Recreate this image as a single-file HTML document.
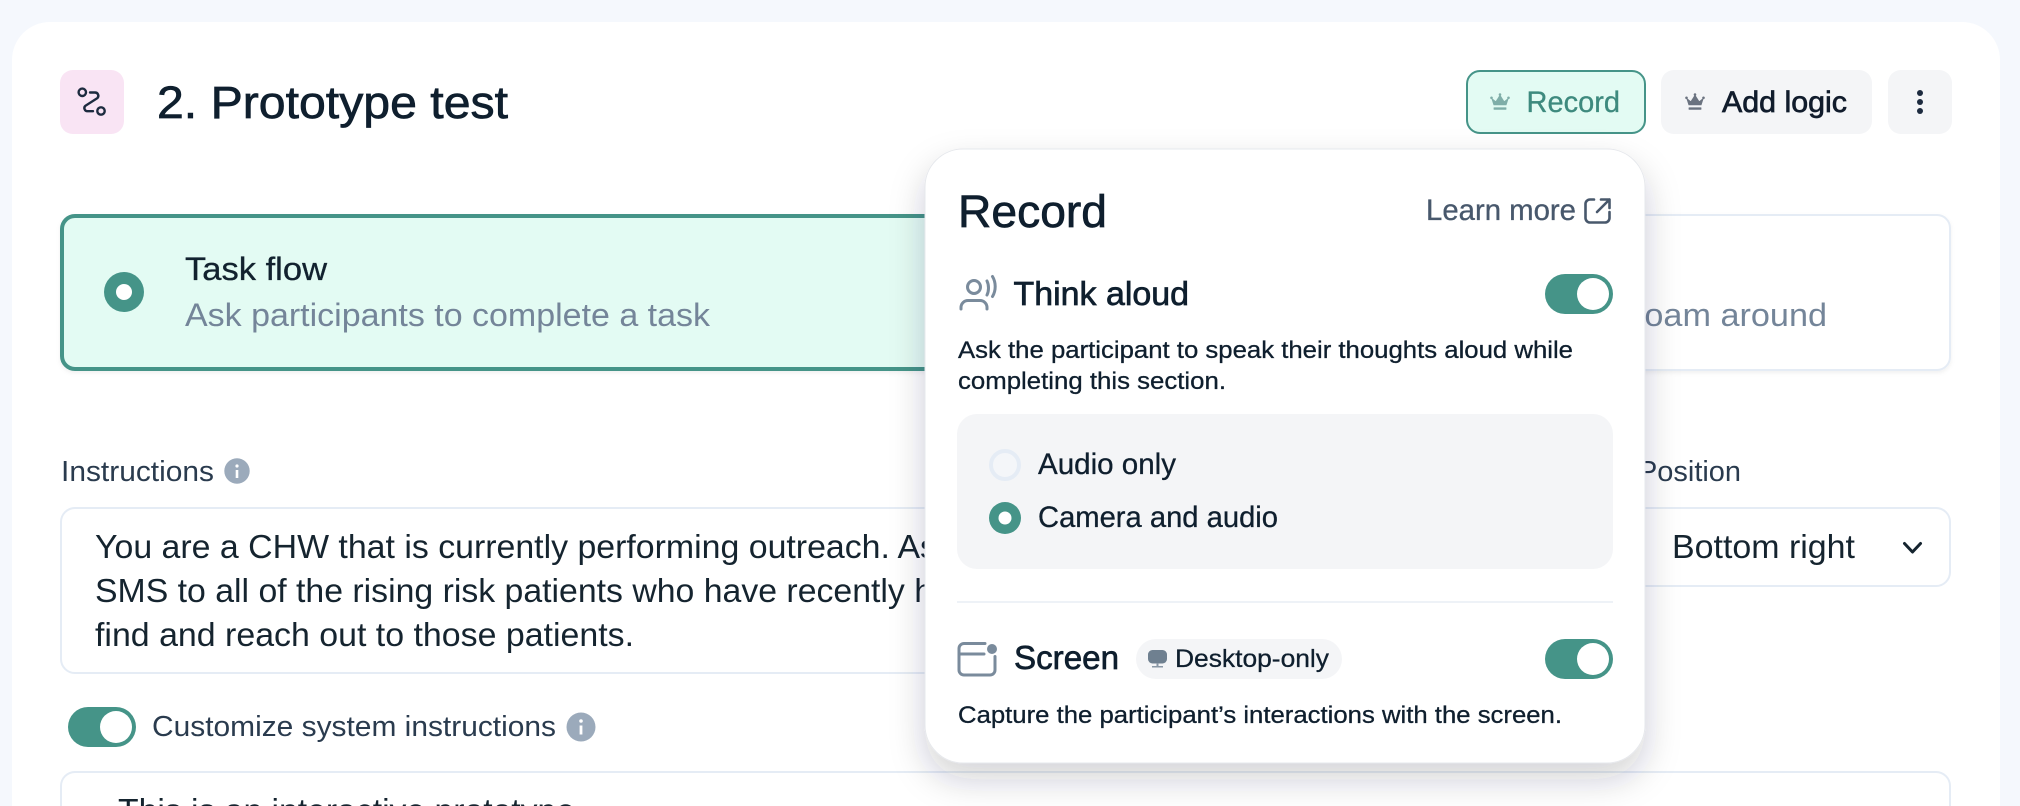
<!DOCTYPE html>
<html lang="en">
<head>
<meta charset="utf-8">
<title>Prototype test</title>
<style>
html,body{margin:0;padding:0;background:#F5F8FD;width:2020px;height:806px;overflow:hidden}
svg{display:block;font-family:"Liberation Sans",sans-serif;overflow:hidden}
.m{stroke:currentColor;stroke-width:.7px}
.s{stroke:currentColor;stroke-width:.3px}
text{fill:currentColor;color:#0F1F2E}
</style>
</head>
<body>
<svg width="2020" height="806" viewBox="0 0 2020 806" xmlns="http://www.w3.org/2000/svg">
<defs>
<filter id="pop" x="-10%" y="-10%" width="120%" height="123%">
<feDropShadow dx="0" dy="16" stdDeviation="17" flood-color="#1a2433" flood-opacity=".2"/>
</filter>
<filter id="soft" x="-5%" y="-10%" width="110%" height="125%">
<feDropShadow dx="0" dy="2" stdDeviation="2" flood-color="#1a2433" flood-opacity=".06"/>
</filter>
<g id="crown">
<path d="M1.600 5.200 L5.800 8.600 L10 2 L14.200 8.600 L18.400 5.200 L16.200 12 H3.800 Z" fill="currentColor" stroke="currentColor" stroke-width=".6" stroke-linejoin="round"/>
<circle cx="1.500" cy="4.800" r="1.300" fill="currentColor"/><circle cx="10" cy="1.500" r="1.300" fill="currentColor"/><circle cx="18.500" cy="4.800" r="1.300" fill="currentColor"/>
<rect x="3.600" y="14.400" width="12.800" height="2.400" rx=".5" fill="currentColor"/>
</g>
</defs>

<rect width="2020" height="806" fill="#F5F8FD"/>
<path d="M12 806 V60 a38 38 0 0 1 38 -38 H1962 a38 38 0 0 1 38 38 V806 Z" fill="#fff"/>

<!-- header -->
<rect x="60" y="70" width="64" height="64" rx="13" fill="#F9E4F4"/>
<g fill="none" stroke="#1D2B3F" stroke-width="2.400" stroke-linecap="round">
<circle cx="82.300" cy="92.300" r="3.700"/><circle cx="101" cy="111" r="3.700"/>
<path d="M90 92.500 H95 a3.300 3.300 0 0 1 2.400 5.600 L85.400 105.800 a3.100 3.100 0 0 0 2.300 5.400 H93"/>
</g>
<text x="157" y="118" font-size="45" textLength="351" lengthAdjust="spacingAndGlyphs" class="m">2. Prototype test</text>

<rect x="1467" y="71" width="178" height="62" rx="13" fill="#E3FBF3" stroke="#459488" stroke-width="2"/>
<use href="#crown" x="1490" y="93" style="color:#7FAEA8"/>
<text x="1526.500" y="112" font-size="30" textLength="93.500" lengthAdjust="spacingAndGlyphs" style="color:#3E8A7E" class="s">Record</text>
<rect x="1661" y="70" width="211" height="64" rx="13" fill="#F4F5F7"/>
<use href="#crown" x="1685" y="93" style="color:#6B7380"/>
<text x="1722" y="112" font-size="30" textLength="125" lengthAdjust="spacingAndGlyphs" class="m" style="color:#111C2C">Add logic</text>
<rect x="1888" y="70" width="64" height="64" rx="13" fill="#F4F5F7"/>
<circle cx="1920" cy="93" r="3" fill="#1D2B3F"/><circle cx="1920" cy="102" r="3" fill="#1D2B3F"/><circle cx="1920" cy="111" r="3" fill="#1D2B3F"/>

<!-- option cards -->
<rect x="62" y="216" width="900" height="153" rx="13" fill="#E3FBF3" stroke="#459488" stroke-width="4" filter="url(#soft)"/>
<circle cx="124" cy="292" r="20" fill="#459488"/><circle cx="124" cy="292" r="8" fill="#fff"/>
<text x="185" y="280" font-size="32" textLength="142" lengthAdjust="spacingAndGlyphs" class="s" style="color:#12222F">Task flow</text>
<text x="185" y="326" font-size="32" textLength="525" lengthAdjust="spacingAndGlyphs" style="color:#748599">Ask participants to complete a task</text>

<rect x="1000" y="215" width="950" height="155" rx="13" fill="#fff" stroke="#E5ECF5" stroke-width="2" filter="url(#soft)"/>
<text x="1633" y="326" font-size="32" textLength="194" lengthAdjust="spacingAndGlyphs" style="color:#748599">roam around</text>

<!-- instructions -->
<text x="61" y="481" font-size="29" textLength="153" lengthAdjust="spacingAndGlyphs" style="color:#2A3B4E">Instructions</text>
<circle cx="237" cy="471" r="12.700" fill="#9BAABB"/><rect x="235.700" y="470" width="2.600" height="8" fill="#fff"/><circle cx="237" cy="466" r="1.600" fill="#fff"/>

<rect x="61" y="508" width="1540" height="165" rx="14" fill="#fff" stroke="#E5ECF5" stroke-width="2"/>
<text x="95" y="558" font-size="33" textLength="842" lengthAdjust="spacingAndGlyphs" style="color:#15242F">You are a CHW that is currently performing outreach. As</text>
<text x="95" y="602" font-size="33" textLength="838" lengthAdjust="spacingAndGlyphs" style="color:#15242F">SMS to all of the rising risk patients who have recently h</text>
<text x="95" y="646" font-size="33" textLength="539" lengthAdjust="spacingAndGlyphs" style="color:#15242F">find and reach out to those patients.</text>

<text x="1638" y="481" font-size="29" textLength="103" lengthAdjust="spacingAndGlyphs" style="color:#2A3B4E">Position</text>
<rect x="1500" y="508" width="450" height="78" rx="14" fill="#fff" stroke="#E5ECF5" stroke-width="2"/>
<text x="1672" y="558" font-size="33" textLength="183" lengthAdjust="spacingAndGlyphs" style="color:#15242F">Bottom right</text>
<path d="M1904.500 543.500 L1912.500 552 L1920.500 543.500" fill="none" stroke="#15242F" stroke-width="3" stroke-linecap="round" stroke-linejoin="round"/>

<rect x="68" y="707" width="68" height="40" rx="20" fill="#459488"/><circle cx="116" cy="727" r="16" fill="#fff"/>
<text x="152" y="736" font-size="29" textLength="404" lengthAdjust="spacingAndGlyphs" style="color:#2A3B4E">Customize system instructions</text>
<circle cx="581" cy="727" r="14.500" fill="#9BAABB"/><rect x="579.600" y="725.500" width="2.800" height="9" fill="#fff"/><circle cx="581" cy="721" r="1.800" fill="#fff"/>

<path d="M61 806 V786 a14 14 0 0 1 14 -14 H1936 a14 14 0 0 1 14 14 V806" fill="#fff" stroke="#E5ECF5" stroke-width="2"/>
<svg x="0" y="772" width="2020" height="34" viewBox="0 772 2020 34">
<text x="118" y="822" font-size="33" textLength="457" lengthAdjust="spacingAndGlyphs" style="color:#15242F">This is an interactive prototype</text>
</svg>

<!-- popover -->
<rect x="925" y="149" width="720" height="614" rx="38" fill="#fff" stroke="#E6E8EC" stroke-width="1" filter="url(#pop)"/>
<text x="958" y="227" font-size="45" textLength="149" lengthAdjust="spacingAndGlyphs" class="m">Record</text>
<text x="1426" y="220" font-size="29.500" textLength="150" lengthAdjust="spacingAndGlyphs" style="color:#48586C" class="s">Learn more</text>
<g fill="none" stroke="#48586C" stroke-width="2.600" stroke-linecap="round" stroke-linejoin="round">
<path d="M1594 199.500 H1590 a4.500 4.500 0 0 0 -4.500 4.500 V218 a4.500 4.500 0 0 0 4.500 4.500 H1605 a4.500 4.500 0 0 0 4.500 -4.500 V212"/>
<path d="M1597 212 L1609.500 199.500 M1601 199.500 H1609.500 V208"/>
</g>

<g fill="none" stroke="#7A8B9C" stroke-width="3" stroke-linecap="round">
<circle cx="974" cy="287" r="6.500"/>
<path d="M961 309 v-1.500 a7 7 0 0 1 7 -7 h12 a7 7 0 0 1 7 7 v1.500"/>
<path d="M987 281 c2 4 2 10 0 14 M992.500 276.500 c3.600 6 3.600 14 0 20"/>
</g>
<text x="1013.500" y="305" font-size="33" textLength="175.500" lengthAdjust="spacingAndGlyphs" class="m">Think aloud</text>
<rect x="1545" y="274" width="68" height="40" rx="20" fill="#459488"/><circle cx="1593" cy="294" r="16" fill="#fff"/>
<text x="958" y="358" font-size="24.500" textLength="615" lengthAdjust="spacingAndGlyphs" class="s">Ask the participant to speak their thoughts aloud while</text>
<text x="958" y="389" font-size="24.500" textLength="268" lengthAdjust="spacingAndGlyphs" class="s">completing this section.</text>

<rect x="957" y="414" width="656" height="155" rx="20" fill="#F4F5F7"/>
<circle cx="1005" cy="465" r="14" fill="#F4F6F9" stroke="#E5ECF5" stroke-width="4"/>
<text x="1038" y="474" font-size="29.500" textLength="138" lengthAdjust="spacingAndGlyphs" class="s">Audio only</text>
<circle cx="1005" cy="518" r="16" fill="#459488"/><circle cx="1005" cy="518" r="6.500" fill="#fff"/>
<text x="1038" y="527" font-size="29.500" textLength="240" lengthAdjust="spacingAndGlyphs" class="s">Camera and audio</text>

<rect x="957" y="601" width="656" height="2" fill="#EEF2F7"/>

<g fill="none" stroke="#7A8B9C" stroke-width="3" stroke-linecap="round">
<path d="M985 643.500 H964 a5 5 0 0 0 -5 5 V670 a5 5 0 0 0 5 5 H990 a5 5 0 0 0 5 -5 V656.500"/>
<path d="M959 654 H984"/>
</g>
<circle cx="992" cy="649" r="5" fill="#7A8B9C"/>
<text x="1014" y="669" font-size="33" textLength="105" lengthAdjust="spacingAndGlyphs" class="m">Screen</text>
<rect x="1136" y="639" width="206" height="40" rx="20" fill="#F4F5F7"/>
<rect x="1148" y="650" width="19" height="13.500" rx="4.500" fill="#6F8090"/>
<rect x="1156.500" y="663" width="2" height="3" fill="#8A98A6"/><rect x="1152" y="666" width="11" height="1.500" fill="#8A98A6"/>
<text x="1175" y="667" font-size="25" textLength="154" lengthAdjust="spacingAndGlyphs" class="s">Desktop-only</text>
<rect x="1545" y="639" width="68" height="40" rx="20" fill="#459488"/><circle cx="1593" cy="659" r="16" fill="#fff"/>
<text x="958" y="723" font-size="24.500" textLength="604" lengthAdjust="spacingAndGlyphs" class="s">Capture the participant’s interactions with the screen.</text>
</svg>
</body>
</html>
